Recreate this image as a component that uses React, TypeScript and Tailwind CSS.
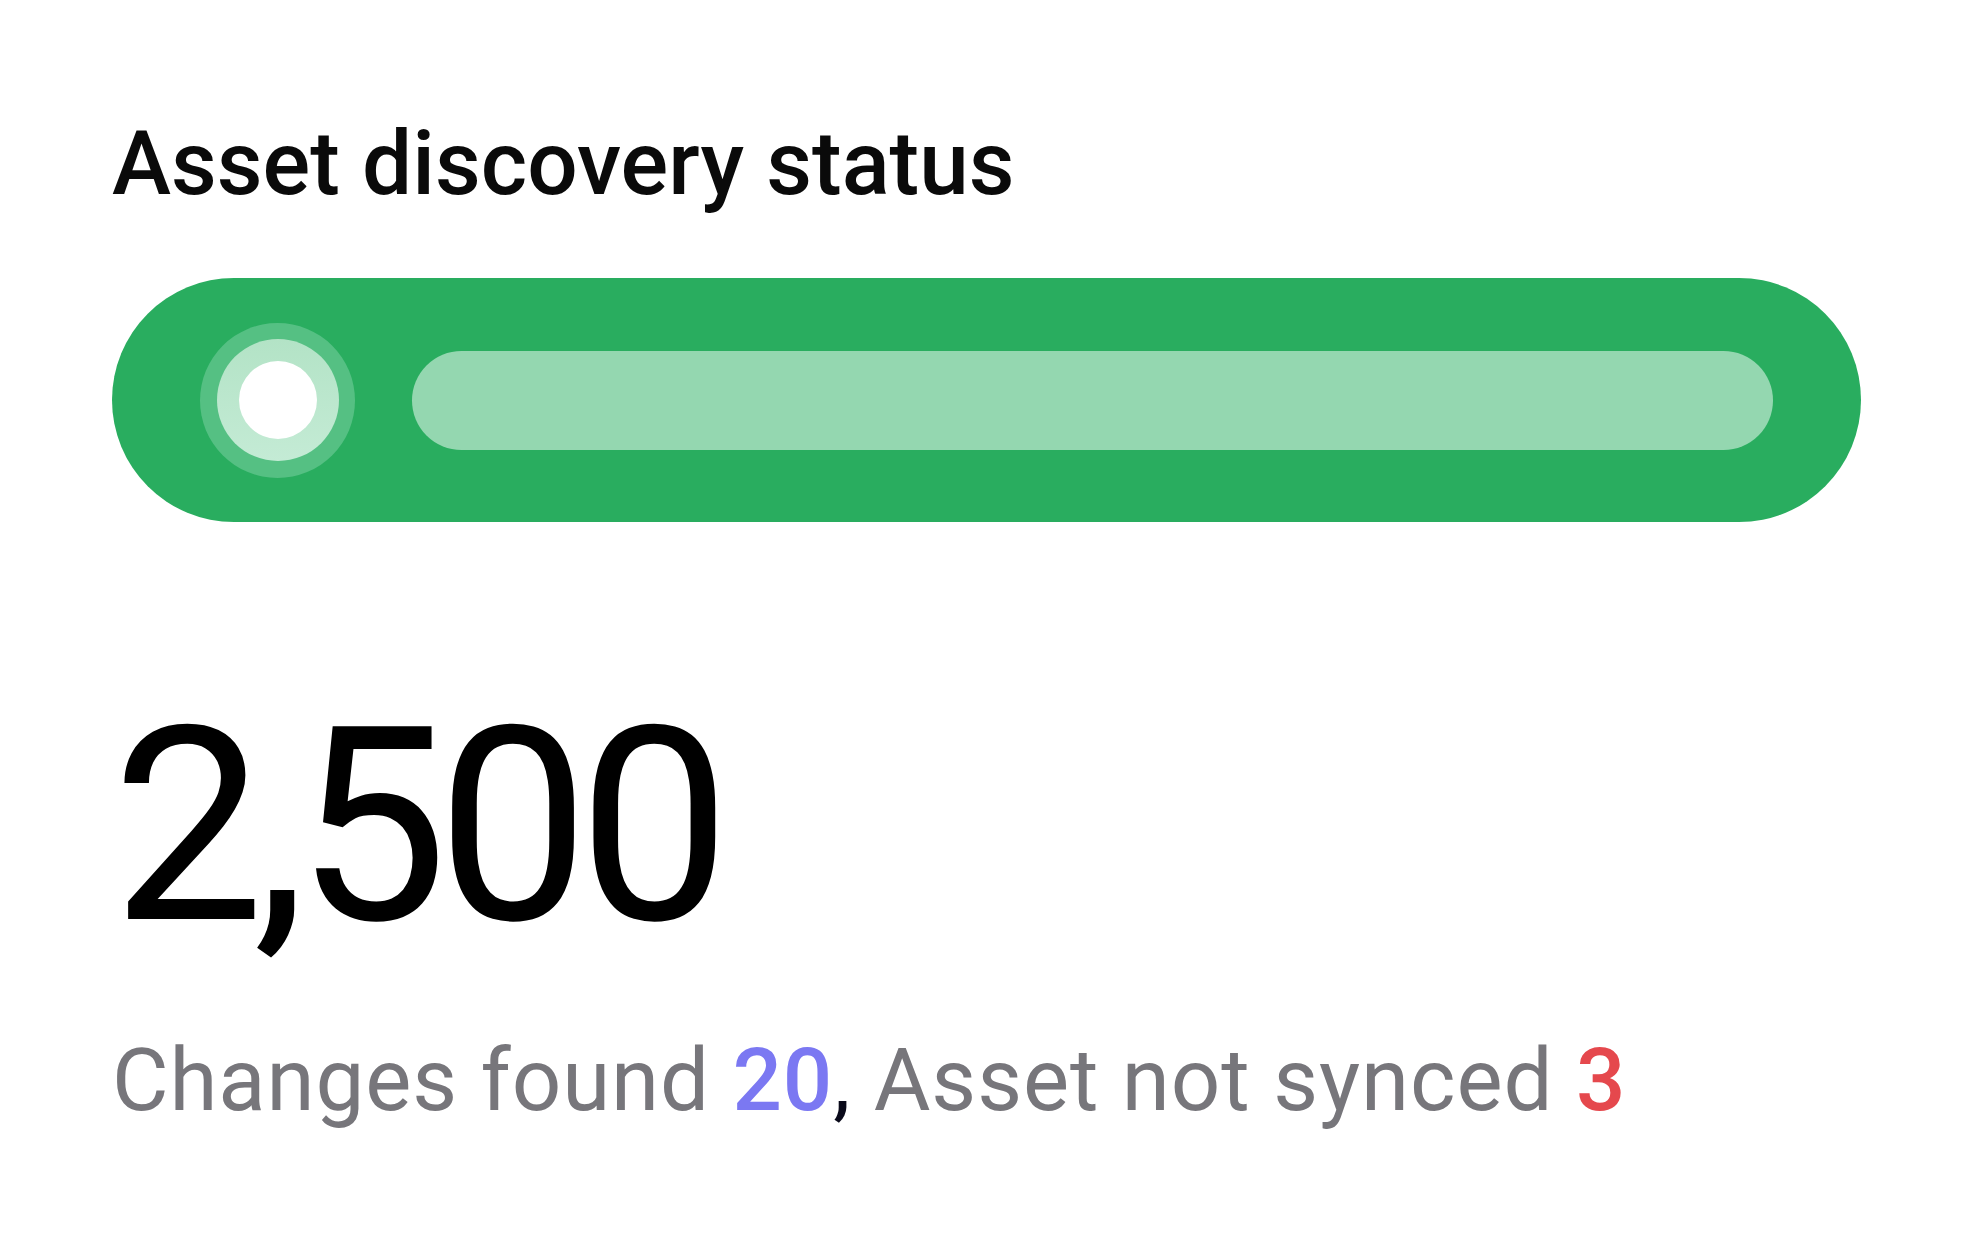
export default function App() {
  return (
    <div className="w-[1984px] h-[1245px] bg-white pl-[112px] pt-[119px] pr-[123px]" style={{ fontFamily: "Roboto, 'Noto Sans', sans-serif" }}>
      <h1 className="text-[89px] leading-none font-medium text-[#0a0a0a]">Asset discovery status</h1>
      <div className="mt-[70px] h-[244px] w-[1749px] rounded-full bg-[#29ad5f] flex items-center px-[88px] gap-[57px]">
        <div className="w-[155px] h-[155px] rounded-full bg-[#55c083] flex items-center justify-center shrink-0">
          <div className="w-[122px] h-[122px] rounded-full bg-gradient-to-b from-[#b3e3c6] to-[#c4ebd5] flex items-center justify-center">
            <div className="w-[78px] h-[78px] rounded-full bg-white" />
          </div>
        </div>
        <div className="flex-1 h-[99px] rounded-full bg-[#94d7b0]" />
      </div>
      <div className="mt-[169px] text-[271px] leading-none text-black tracking-[-11px]">2,500</div>
      <div className="mt-[75px] text-[87px] leading-none text-[#77767b] tracking-[0.9px]">
        Changes found <span className="font-medium text-[#7b78f2]">20</span><span className="text-[#0a0a1a]">,</span> Asset not synced <span className="font-medium text-[#e5484d]">3</span>
      </div>
    </div>
  );
}
